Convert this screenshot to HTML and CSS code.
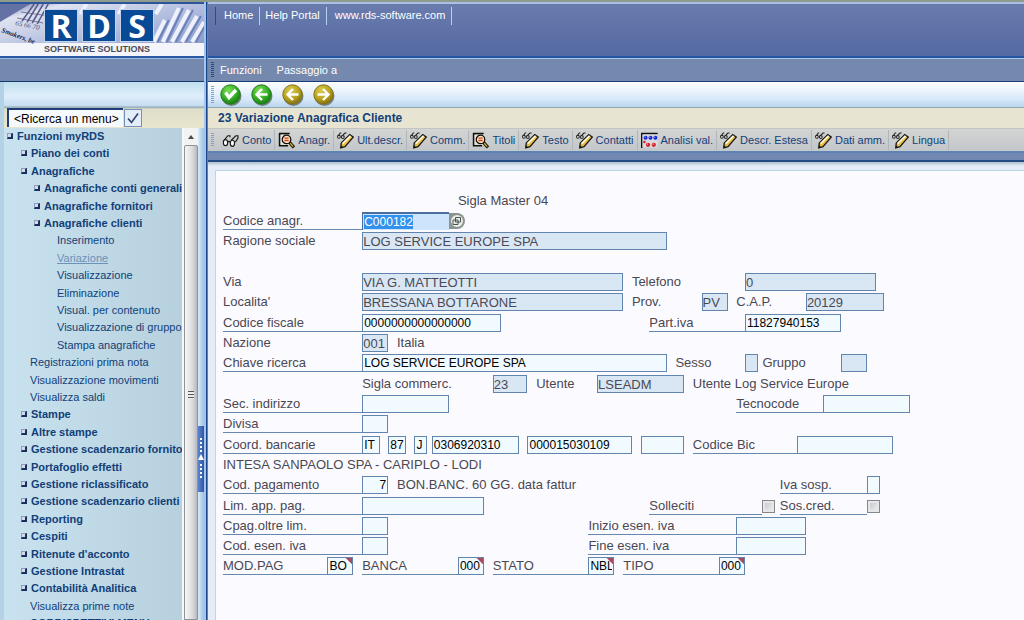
FILE: index.html
```html
<!DOCTYPE html>
<html lang="it">
<head>
<meta charset="utf-8">
<title>Variazione Anagrafica Cliente</title>
<link rel="stylesheet" href="styles.css">
</head>
<body>
<svg class="defs" aria-hidden="true">
  <defs>
    <radialGradient id="gGreen" cx="40%" cy="30%" r="70%"><stop offset="0" stop-color="#7fe05a"/><stop offset=".6" stop-color="#35b026"/><stop offset="1" stop-color="#1a7d14"/></radialGradient>
    <radialGradient id="gGold" cx="40%" cy="30%" r="70%"><stop offset="0" stop-color="#d8ca50"/><stop offset=".6" stop-color="#bba520"/><stop offset="1" stop-color="#84700e"/></radialGradient>
  </defs>
  <symbol id="glasses" viewBox="0 0 16 16">
    <g fill="none" stroke="#1b1b1b" stroke-width="1.1"><path d="M1 9L5.500 3.500h2v1.500M8.500 8L13 3.500h2v2.500l-2.500 3.500"/><ellipse cx="3.300" cy="10" rx="2" ry="2.800" fill="#fff"/><ellipse cx="9.800" cy="10.700" rx="2" ry="2.900" fill="#fff"/><path d="M5.300 9.500q1.200-1.500 2.500 0"/></g>
  </symbol>
  <symbol id="lens" viewBox="0 0 16 16">
    <path d="M1 1.500h10M1.500 1v12h8" fill="none" stroke="#111" stroke-width="1.500"/><path d="M2.500 2.500h9v9.500h-9z" fill="#eee8d4"/>
    <circle cx="8" cy="7" r="4" fill="#fde3c6" stroke="#111" stroke-width="1.200"/><path d="M6 5.800h4M6 8h4" stroke="#d8430f" stroke-width="1.200"/><path d="M11 10l4 4.500" stroke="#111" stroke-width="3"/><path d="M11.500 10.600l2.800 3.100" stroke="#e3b52d" stroke-width="1.200"/>
  </symbol>
  <symbol id="pencil" viewBox="0 0 16 16">
    <path d="M0.500 4.500L3 1h1M4.500 4L7.500 1h1.500" fill="none" stroke="#222"/><circle cx="1.800" cy="4.500" r="1.300" fill="#fff" stroke="#222"/><circle cx="5.500" cy="4.700" r="1.300" fill="#fff" stroke="#222"/>
    <path d="M3.500 15l.5-4.500 8-8 3.300 2.300-7.800 9z" fill="#e9bd45" stroke="#171717" stroke-width="1.200"/><path d="M5.300 11l7.500-7.300" stroke="#fff8d8" stroke-width="1.600"/><path d="M3.500 15l.3-2.200 1.900 1.600z" fill="#111"/>
  </symbol>
  <symbol id="analysis" viewBox="0 0 16 16">
    <path d="M.7 15V1.500h15" fill="none" stroke="#111" stroke-width="1.400"/><path d="M1.500 2.500h14v12h-14z" fill="#d9dade"/>
    <g fill="#1420d8"><circle cx="4.300" cy="5.400" r="1.900"/><circle cx="8.900" cy="5.400" r="1.900"/><circle cx="13.500" cy="5.400" r="1.900"/></g>
    <g fill="#d5202b"><circle cx="3.200" cy="9.500" r="1.200"/><circle cx="6.600" cy="12" r="2"/><circle cx="12" cy="12" r="2"/></g>
    <g fill="#fff"><circle cx="3.800" cy="4.800" r=".5"/><circle cx="8.400" cy="4.800" r=".5"/><circle cx="13" cy="4.800" r=".5"/><circle cx="6" cy="11.400" r=".5"/><circle cx="11.400" cy="11.400" r=".5"/></g>
  </symbol>
  <symbol id="shadow" viewBox="0 0 22 22"><circle cx="11.500" cy="12" r="10" fill="#4d5c52" opacity=".7"/></symbol>
  <symbol id="ok" viewBox="0 0 22 22"><use href="#shadow"/><circle cx="10.500" cy="10.500" r="9.700" fill="url(#gGreen)" stroke="#247d1d"/><path d="M5.500 8.500l3.500 5L16 6" fill="none" stroke="#fff" stroke-width="3.400"/></symbol>
  <symbol id="arrowL" viewBox="0 0 22 22"><path d="M16.500 10.500H6.500M11 5l-5.500 5.500L11 16" fill="none" stroke="#fff" stroke-width="2.400"/></symbol>
  <symbol id="back" viewBox="0 0 22 22"><use href="#shadow"/><circle cx="10.500" cy="10.500" r="9.700" fill="url(#gGreen)" stroke="#247d1d"/><use href="#arrowL"/></symbol>
  <symbol id="prev" viewBox="0 0 22 22"><use href="#shadow"/><circle cx="10.500" cy="10.500" r="9.700" fill="url(#gGold)" stroke="#87741a"/><use href="#arrowL"/></symbol>
  <symbol id="next" viewBox="0 0 22 22"><use href="#shadow"/><circle cx="10.500" cy="10.500" r="9.700" fill="url(#gGold)" stroke="#87741a"/><path d="M4.500 10.500H15M10 5l5.500 5.500L10 16" fill="none" stroke="#fff" stroke-width="2.400"/></symbol>
</svg>

<div class="app">
  <aside class="side">
    <div class="brand">
      <svg class="photo" viewBox="0 0 203 52" preserveAspectRatio="none" aria-hidden="true">
        <defs><linearGradient id="gPaper" x1="0" x2="1" y1="0" y2="1"><stop offset="0" stop-color="#6472a6"/><stop offset=".16" stop-color="#dfe2f1"/><stop offset=".5" stop-color="#b4bfdf"/><stop offset="1" stop-color="#7f92c6"/></linearGradient></defs>
        <rect width="203" height="52" fill="url(#gPaper)"/>
        <path d="M0 0h30L0 18z" fill="#6371a5"/>
        <path d="M17 14L43 19M21 8l28 4" stroke="#7a7b9b" fill="none"/>
        <g stroke="#555a86" stroke-width="1.500"><path d="M22 17L34 0M27 18L38 0M32 19L43 0M37 20L48 0"/></g>
        <g stroke="#eef1fb" stroke-width="4"><path d="M153 38L164 16M162 38L178 4M171 38L188 6M181 38L196 12M191 38L203 18M80 10l6-10M118 10l6-10M155 10l6-10"/></g>
        <g stroke="#6c80bb" stroke-width="2"><path d="M157 38L168 16M166 38L182 4M175 38L192 6M185 38L200 12M195 38L206 18"/></g>
        <rect y="39" width="203" height="13" fill="#f4f5fa"/>
        <g class="script-text"><text transform="translate(15 21) rotate(12)">65 66 70</text><text class="heavy" transform="translate(1 28) rotate(20)">Smokers, be</text></g>
      </svg>
      <div class="logo">
        <div class="tiles"><span>R</span><span>D</span><span>S</span></div>
        <div class="tagline">SOFTWARE SOLUTIONS</div>
      </div>
    </div>
    <div class="side-bar"></div>
    <div class="side-body">
      <form class="search">
        <input type="text" aria-label="Ricerca un menu" value="&lt;Ricerca un menu&gt;">
        <button type="button" aria-label="Cerca"><svg viewBox="0 0 16 16"><path d="M3 8.500l3.500 4L13 3.500" fill="none" stroke="#33466e" stroke-width="1.700"/></svg></button>
      </form>
      <div class="tree-area">
        <ul class="tree">
          <li class="l0"><a href="#">Funzioni myRDS</a></li>
          <li class="l1"><a href="#">Piano dei conti</a></li>
          <li class="l1"><a href="#">Anagrafiche</a></li>
          <li class="l2"><a href="#">Anagrafiche conti generali</a></li>
          <li class="l2"><a href="#">Anagrafiche fornitori</a></li>
          <li class="l2"><a href="#">Anagrafiche clienti</a></li>
          <li class="leaf deep"><a href="#">Inserimento</a></li>
          <li class="leaf deep current"><a href="#">Variazione</a></li>
          <li class="leaf deep"><a href="#">Visualizzazione</a></li>
          <li class="leaf deep"><a href="#">Eliminazione</a></li>
          <li class="leaf deep"><a href="#">Visual. per contenuto</a></li>
          <li class="leaf deep"><a href="#">Visualizzazione di gruppo</a></li>
          <li class="leaf deep"><a href="#">Stampa anagrafiche</a></li>
          <li class="leaf"><a href="#">Registrazioni prima nota</a></li>
          <li class="leaf"><a href="#">Visualizzazione movimenti</a></li>
          <li class="leaf"><a href="#">Visualizza saldi</a></li>
          <li class="l1"><a href="#">Stampe</a></li>
          <li class="l1"><a href="#">Altre stampe</a></li>
          <li class="l1"><a href="#">Gestione scadenzario fornitori</a></li>
          <li class="l1"><a href="#">Portafoglio effetti</a></li>
          <li class="l1"><a href="#">Gestione riclassificato</a></li>
          <li class="l1"><a href="#">Gestione scadenzario clienti</a></li>
          <li class="l1"><a href="#">Reporting</a></li>
          <li class="l1"><a href="#">Cespiti</a></li>
          <li class="l1"><a href="#">Ritenute d'acconto</a></li>
          <li class="l1"><a href="#">Gestione Intrastat</a></li>
          <li class="l1"><a href="#">Contabilità Analitica</a></li>
          <li class="leaf"><a href="#">Visualizza prime note</a></li>
          <li class="leaf heavy"><a href="#">CORRISPETTIVI MENU</a></li>
        </ul>
        <div class="scroll"><span class="up"></span><span class="thumb"><i></i></span></div>
        <div class="gutter"><button type="button" class="handle" aria-label="Riduci menu"><svg viewBox="0 0 6 66"><path d="M3 28l3 6H0z" fill="#fff"/><path d="M3 12v14M3 38v16" stroke="#fff" stroke-width="2" stroke-dasharray="2 2"/></svg></button></div>
      </div>
    </div>
  </aside>

  <main class="main">
    <nav class="links"><a href="#">Home</a><a href="#">Help Portal</a><a href="#" class="site">www.rds-software.com</a></nav>
    <nav class="menubar grip"><a href="#">Funzioni</a><a href="#">Passaggio a</a></nav>
    <div class="actions grip">
      <button type="button" aria-label="Conferma"><svg><use href="#ok"/></svg></button>
      <button type="button" aria-label="Indietro"><svg><use href="#back"/></svg></button>
      <button type="button" aria-label="Precedente"><svg><use href="#prev"/></svg></button>
      <button type="button" aria-label="Successivo"><svg><use href="#next"/></svg></button>
    </div>
    <h1 class="title">23 Variazione Anagrafica Cliente</h1>
    <div class="tools grip">
      <button type="button"><svg><use href="#glasses"/></svg>Conto</button>
      <button type="button"><svg><use href="#lens"/></svg>Anagr.</button>
      <button type="button"><svg><use href="#pencil"/></svg>Ult.descr.</button>
      <button type="button"><svg><use href="#pencil"/></svg>Comm.</button>
      <button type="button"><svg><use href="#lens"/></svg>Titoli</button>
      <button type="button"><svg><use href="#pencil"/></svg>Testo</button>
      <button type="button"><svg><use href="#pencil"/></svg>Contatti</button>
      <button type="button"><svg><use href="#analysis"/></svg>Analisi val.</button>
      <button type="button"><svg><use href="#pencil"/></svg>Descr. Estesa</button>
      <button type="button"><svg><use href="#pencil"/></svg>Dati amm.</button>
      <button type="button"><svg><use href="#pencil"/></svg>Lingua</button>
    </div>
    <div class="band"></div>
    <div class="work">
      <form class="sheet">
        <div class="group">
          <div class="row"><span class="at-27 w-20">Sigla Master 04</span></div>
          <div class="row"><label class="line at-0 w-16" for="cod">Codice anagr.</label><input id="cod" class="at-16 w-10 active" value="C000182"><button type="button" class="at-26 w-2 help" aria-label="Ricerca codice"><svg viewBox="0 0 16 16"><path d="M0 0h8a8 8 0 0 1 0 16H0z" fill="#8b948e"/><circle cx="8" cy="8" r="6" fill="#e8ece8"/><path d="M6.500 4.500h5v4.500h-5zM4 7h5v4.500H4z" fill="#e8ece8" stroke="#4d554f"/></svg></button></div>
          <div class="row"><label class="at-0 w-16" for="rag">Ragione sociale</label><input id="rag" class="at-16 w-35" readonly value="LOG SERVICE EUROPE SPA"></div>
        </div>
        <div class="group">
          <div class="row"></div>
          <div class="row"><label class="at-0 w-16" for="via">Via</label><input id="via" class="at-16 w-30" readonly value="VIA G. MATTEOTTI"><label class="at-47 w-11" for="tel">Telefono</label><input id="tel" class="at-60 w-15" readonly value="0"></div>
          <div class="row"><label class="at-0 w-16" for="loc">Localita'</label><input id="loc" class="at-16 w-30" readonly value="BRESSANA BOTTARONE"><label class="at-47 w-8" for="prov">Prov.</label><input id="prov" class="at-55 w-3" readonly value="PV"><label class="at-59 w-8" for="cap">C.A.P.</label><input id="cap" class="at-67 w-9" readonly value="20129"></div>
        </div>
        <div class="group">
          <div class="row"><label class="line at-0 w-16" for="cf">Codice fiscale</label><input id="cf" class="at-16 w-16" value="0000000000000000"><label class="line at-49 w-11" for="piva">Part.iva</label><input id="piva" class="at-60 w-11" value="11827940153"></div>
          <div class="row"><label class="at-0 w-16" for="naz">Nazione</label><input id="naz" class="at-16 w-3" readonly value="001"><span class="at-20 w-10">Italia</span></div>
          <div class="row"><label class="line at-0 w-16" for="chi">Chiave ricerca</label><input id="chi" class="at-16 w-35" value="LOG SERVICE EUROPE SPA"><label class="at-52 w-8" for="ses">Sesso</label><input id="ses" class="at-60 w-1" readonly><label class="at-62 w-8" for="gru">Gruppo</label><input id="gru" class="at-71 w-3" readonly></div>
        </div>
        <div class="group">
          <div class="row"><label class="at-16 w-15" for="sig">Sigla commerc.</label><input id="sig" class="at-31 w-4" readonly value="23"><label class="at-36 w-7" for="ute">Utente</label><input id="ute" class="at-43 w-10" readonly value="LSEADM"><span class="at-54 w-30">Utente Log Service Europe</span></div>
          <div class="row"><label class="line at-0 w-16" for="sec">Sec. indirizzo</label><input id="sec" class="at-16 w-10"><label class="line at-59 w-10" for="tec">Tecnocode</label><input id="tec" class="at-69 w-10"></div>
          <div class="row"><label class="line at-0 w-16" for="div">Divisa</label><input id="div" class="at-16 w-3"></div>
        </div>
        <div class="group">
          <div class="row"><label class="line at-0 w-16" for="b1">Coord. bancarie</label><input id="b1" class="at-16 w-2" value="IT"><input aria-label="CIN Europa" class="at-19 w-2" value="87"><input aria-label="CIN" class="at-22 w-1" value="J"><input aria-label="ABI e CAB" class="at-24 w-10" value="0306920310"><input aria-label="Conto corrente" class="at-35 w-12" value="000015030109"><input aria-label="Suffisso" class="at-48 w-5"><label class="line at-54 w-12" for="bic">Codice Bic</label><input id="bic" class="at-66 w-11"></div>
          <div class="row"><span class="at-0 w-35">INTESA SANPAOLO SPA - CARIPLO - LODI</span></div>
          <div class="row"><label class="line at-0 w-16" for="pag">Cod. pagamento</label><input id="pag" class="at-16 w-3 number" value="7"><span class="at-20 w-30">BON.BANC. 60 GG. data fattur</span><label class="line at-64 w-10" for="ivs">Iva sosp.</label><input id="ivs" class="at-74 w-1"></div>
        </div>
        <div class="group">
          <div class="row"><label class="line at-0 w-16" for="lim">Lim. app. pag.</label><input id="lim" class="at-16 w-14"><label class="line at-49 w-13" for="sol">Solleciti</label><input id="sol" type="checkbox" class="at-62 w-2"><label class="line at-64 w-10" for="sos">Sos.cred.</label><input id="sos" type="checkbox" class="at-74 w-2"></div>
          <div class="row"><label class="line at-0 w-16" for="cpa">Cpag.oltre lim.</label><input id="cpa" class="at-16 w-3"><label class="line at-42 w-17" for="ini">Inizio esen. iva</label><input id="ini" class="at-59 w-8"></div>
          <div class="row"><label class="line at-0 w-16" for="ese">Cod. esen. iva</label><input id="ese" class="at-16 w-3"><label class="line at-42 w-17" for="fin">Fine esen. iva</label><input id="fin" class="at-59 w-8"></div>
          <div class="row"><label class="line at-0 w-12" for="mod">MOD.PAG</label><input id="mod" class="at-12 w-3 flag" value="BO"><label class="line at-16 w-11" for="ban">BANCA</label><input id="ban" class="at-27 w-3 flag" value="000"><label class="line at-31 w-11" for="sta">STATO</label><input id="sta" class="at-42 w-3 flag" value="NBL"><label class="line at-46 w-11" for="tip">TIPO</label><input id="tip" class="at-57 w-3 flag" value="000"></div>
        </div>
      </form>
    </div>
  </main>
</div>
<script src="app.js"></script>
</body>
</html>
```
FILE: app.js
```js
const code = document.getElementById('cod');
code.focus({ preventScroll: true });
code.select();
```
FILE: styles.css
```css
* { box-sizing: border-box; }
body {
  margin: 0;
  font-family: "Liberation Sans", Arial, sans-serif;
  font-size: 11px;
  color: #123f78;
  background: #5a70a4;
}
a { color: inherit; text-decoration: none; }
button { font: inherit; color: inherit; padding: 0; border: 0; background: none; }
.defs { position: absolute; width: 0; height: 0; }

.app {
  display: flex;
  height: 100vh;
  border-top: 2px solid #8f9b8b;
  overflow: hidden;
}

/* side column */
.side {
  flex: 0 0 207px;
  min-width: 0;
  display: flex;
  flex-direction: column;
  min-height: 0;
  border-right: 1px solid #17468c;
  background: #a9c4e8;
  padding-right: 2px;
}
.brand { position: relative; flex: none; height: 54px; border-top: 2px solid #2c559c; }
.photo { display: block; width: 100%; height: 100%; }
.script-text { font-family: "Liberation Serif", serif; font-style: italic; font-size: 7px; fill: #4a4c74; }
.script-text .heavy { font-weight: bold; fill: #20244c; }
.logo { position: absolute; left: 44px; top: 5px; }
.tiles { display: flex; gap: 4px; }
.tiles span {
  width: 34px;
  height: 33px;
  background: #084a96;
  border: 1px solid #c5d4ec;
  color: #fff;
  font: bold 32px/32px "Open Sans", "Liberation Sans", sans-serif;
  text-align: center;
}
.tagline { margin-top: 2px; font-size: 9px; font-weight: bold; line-height: 10px; color: #4a4b58; white-space: nowrap; }
.side-bar { flex: none; height: 26px; background: #7589ae; border-top: 2px solid #2c59a4; border-bottom: 1px solid #14396f; box-shadow: inset 0 1px #9db9e4; }
.side-body {
  flex: 1;
  min-height: 0;
  display: flex;
  flex-direction: column;
  border-left: 4px solid #b4d2e6;
  background: linear-gradient(90deg, #c8e2f0, #b4cedb);
}
.search {
  flex: none;
  display: flex;
  align-items: flex-end;
  height: 46px;
  padding: 0 0 1px 3px;
  background: linear-gradient(180deg, #c0e0ee, #dfeefa 14px, #c5dcf0 24px, #8ea5b2 25px, #dfdfc9 27px, #e8e5cf 44px);
}
.search input {
  width: 116px;
  height: 19px;
  padding: 0 0 0 5px;
  border: 0 solid #1f3d78;
  border-width: 2px 0 0 2px;
  background: #f6fafc;
  font: 12px "Liberation Sans", sans-serif;
  color: #000;
}
.search button { width: 18px; height: 18px; margin-left: 1px; border: 1px solid #7790b8; background: #e4eefa; }
.search svg { display: block; width: 16px; height: 16px; }
.tree-area { flex: 1; min-height: 0; display: flex; }
.tree { flex: 1; min-width: 0; margin: 0; padding: 0 0 0 3px; list-style: none; overflow: hidden; font-weight: bold; }
.tree li { height: 17px; line-height: 17px; white-space: nowrap; }
.tree li:nth-child(5n+2), .tree li:nth-child(5n+4) { margin-bottom: 1px; }
.tree li:not(.leaf)::before {
  content: "";
  display: inline-block;
  box-sizing: border-box;
  width: 6px;
  height: 6px;
  margin-right: 4px;
  border: 1px solid #8d9cc0;
  border-right: 2px solid #1b2f5c;
  border-bottom: 2px solid #1b2f5c;
  background: #d4dcec;
  vertical-align: 1px;
}
.l1 { padding-left: 14px; }
.l2 { padding-left: 27px; }
.leaf { padding-left: 23px; font-weight: normal; }
.deep { padding-left: 50px; }
.heavy { font-weight: bold; }
.current { color: #6c92b9; }
.current a { text-decoration: underline; }
.scroll { flex: 0 0 16px; display: flex; flex-direction: column; border-left: 2px solid #f4f8fa; background: #eceded; }
.up { height: 17px; background: #f2f3f4; display: grid; place-items: center; }
.up::before { content: ""; border: 3px solid transparent; border-top: 0; border-bottom: 4px solid #4a4a4a; }
.thumb { flex: 1; display: flex; justify-content: center; padding-top: 245px; border: 1px solid #8f9297; border-radius: 2px 2px 0 0; background: linear-gradient(90deg, #f7f7f7, #dcdcde 60%, #b7b9be); }
.thumb i { width: 6px; height: 8px; background: repeating-linear-gradient(180deg, #56585d 0 1px, #eee 1px 3px); }
.gutter { flex: 0 0 6px; display: flex; align-items: flex-start; padding-top: 298px; background: linear-gradient(90deg, #d9edf5, #9fc0e4); }
.handle { width: 6px; height: 66px; background: linear-gradient(90deg, #5c84cf, #2d56a8); }
.handle svg { display: block; width: 6px; height: 66px; }

/* main column */
.main { flex: 1; min-width: 0; display: flex; flex-direction: column; border-left: 1px solid #5a82bf; }
.links {
  flex: none;
  display: flex;
  align-items: flex-start;
  height: 54px;
  padding: 3px 0 0 7px;
  border-top: 2px solid #a9c0e4;
  background: linear-gradient(180deg, #6a7cae, #5469a2);
  color: #fff;
}
.links a { height: 18px; padding: 0 6px 0 5px; line-height: 17px; border-right: 1px solid #b4d1f4; white-space: nowrap; }
.links a:first-child { padding-left: 8px; border-left: 1px solid #2a4d8b; }
.links .site { padding: 0 6px 0 8px; }
.menubar {
  flex: none;
  display: flex;
  align-items: center;
  gap: 15px;
  height: 26px;
  border-top: 2px solid #2455a0;
  border-bottom: 1px solid #143c78;
  box-shadow: inset 0 1px #a8c4ec;
  background: #7589ae;
  color: #fff;
}
.grip { padding-left: 12px; }
.grip::before { content: ""; width: 3px; margin: 4px 6px 4px -9px; align-self: stretch; background: repeating-linear-gradient(180deg, #8ba1c0 0 1px, transparent 1px 2px); }
.menubar.grip::before { background: repeating-linear-gradient(180deg, #294a7e 0 1px, transparent 1px 2px); margin-right: -9px; }
.actions { flex: none; display: flex; align-items: center; gap: 9px; height: 26px; background: linear-gradient(180deg, #fff, #d6e8fb 70%, #bcd4ec); border-bottom: 1px solid #8fa8b4; }
.actions.grip::before { margin-right: -3px; }
.actions button, .actions svg { display: block; width: 22px; height: 22px; }
.title { flex: none; margin: 0; height: 20px; padding-left: 10px; font-size: 12px; line-height: 20px; background: #e7e5d2; }
.tools { flex: none; display: flex; align-items: center; height: 23px; border-top: 1px solid #c0c4c2; background: linear-gradient(180deg, #d3d4d3, #c3c7ca); white-space: nowrap; overflow: hidden; }
.tools.grip::before { margin-right: 5px; }
.tools button { display: flex; align-items: center; gap: 3px; height: 20px; padding: 0 3px; border-right: 1px solid #b0b6bc; }
.tools svg { width: 17px; height: 17px; }
.band { flex: none; height: 11px; border-top: 2px solid #5d85b4; border-bottom: 2px solid #234a82; background: #7189b2; }
.work { flex: 1; min-height: 0; padding: 8px 0 0 7px; background: linear-gradient(180deg, #aebfcc, #e3ecf8 4px); }
.sheet {
  display: flex;
  flex-direction: column;
  gap: 1px;
  min-height: 100%;
  padding: 20px 18px 0 7px;
  border: 1px solid #bdd4e4;
  border-width: 1px 0 0 1px;
  background: #fbfbff;
  color: #4a4753;
  font-size: 13px;
}

/* character grid: 90 cells across the sheet */
.row { display: grid; grid-template-columns: repeat(90, minmax(0, 1fr)); height: 20px; align-items: center; }
.row > * { grid-row: 1; white-space: nowrap; }
.row label, .row span { height: 18px; line-height: 18px; }
.row .line { border-bottom: 1px solid #6488ae; }
.row input {
  min-width: 0;
  width: 100%;
  height: 18px;
  margin: 0;
  padding: 0 1px;
  border: 1px solid #6285ae;
  border-radius: 0;
  outline: 0;
  background: #f0faff;
  color: #000;
  font: 12px "Liberation Sans", Arial, sans-serif;
}
.row input[readonly] { padding: 0; background: #d9e6f3; color: #4a4a55; font-size: 13px; }
.row input.w-1 { width: 13px; }
.row .active { border: 0; border-top: 2px solid #4a6f9e; border-left: 1px solid #4a6f9e; background: #cde4fd; }
.active::selection { background: #3391ee; color: #fff; }
.row .number { text-align: right; }
.row .flag { background: linear-gradient(225deg, #a8485c 4px, transparent 5px) #f0faff; }
.help svg { display: block; width: 16px; height: 16px; }
.row input[type="checkbox"] { appearance: none; width: 13px; height: 13px; border: 1px solid #85878b; background: linear-gradient(135deg, #bfc2c6, #f4f4f4); box-shadow: inset 0 0 0 2px #e6e7e9; }

.at-0 { grid-column-start: 1; }
.at-12 { grid-column-start: 13; }
.at-16 { grid-column-start: 17; }
.at-19 { grid-column-start: 20; }
.at-20 { grid-column-start: 21; }
.at-22 { grid-column-start: 23; }
.at-24 { grid-column-start: 25; }
.at-26 { grid-column-start: 27; }
.at-27 { grid-column-start: 28; }
.at-31 { grid-column-start: 32; }
.at-35 { grid-column-start: 36; }
.at-36 { grid-column-start: 37; }
.at-42 { grid-column-start: 43; }
.at-43 { grid-column-start: 44; }
.at-46 { grid-column-start: 47; }
.at-47 { grid-column-start: 48; }
.at-48 { grid-column-start: 49; }
.at-49 { grid-column-start: 50; }
.at-52 { grid-column-start: 53; }
.at-54 { grid-column-start: 55; }
.at-55 { grid-column-start: 56; }
.at-57 { grid-column-start: 58; }
.at-59 { grid-column-start: 60; }
.at-60 { grid-column-start: 61; }
.at-62 { grid-column-start: 63; }
.at-64 { grid-column-start: 65; }
.at-66 { grid-column-start: 67; }
.at-67 { grid-column-start: 68; }
.at-69 { grid-column-start: 70; }
.at-71 { grid-column-start: 72; }
.at-74 { grid-column-start: 75; }
.w-1 { grid-column-end: span 1; }
.w-2 { grid-column-end: span 2; }
.w-3 { grid-column-end: span 3; }
.w-4 { grid-column-end: span 4; }
.w-5 { grid-column-end: span 5; }
.w-7 { grid-column-end: span 7; }
.w-8 { grid-column-end: span 8; }
.w-9 { grid-column-end: span 9; }
.w-10 { grid-column-end: span 10; }
.w-11 { grid-column-end: span 11; }
.w-12 { grid-column-end: span 12; }
.w-13 { grid-column-end: span 13; }
.w-14 { grid-column-end: span 14; }
.w-15 { grid-column-end: span 15; }
.w-16 { grid-column-end: span 16; }
.w-17 { grid-column-end: span 17; }
.w-20 { grid-column-end: span 20; }
.w-30 { grid-column-end: span 30; }
.w-35 { grid-column-end: span 35; }
```
